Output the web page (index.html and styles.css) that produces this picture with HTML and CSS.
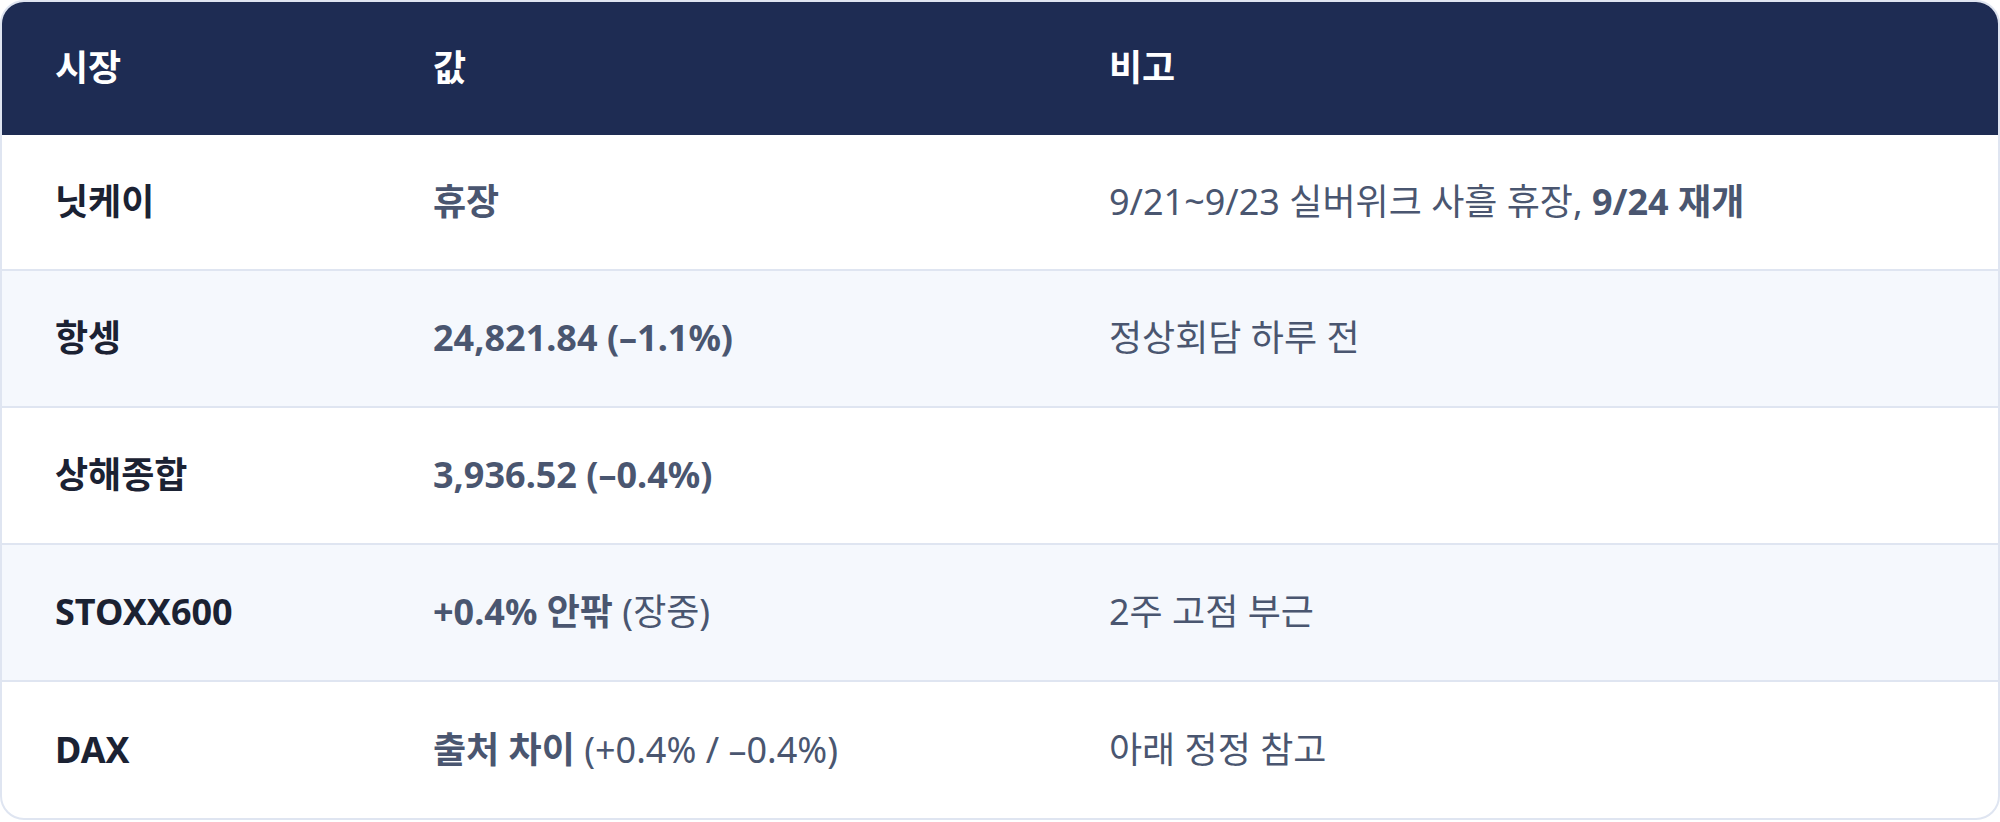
FILE: index.html
```html
<!DOCTYPE html>
<html lang="ko">
<head>
<meta charset="utf-8">
<title>시장</title>
<link rel="stylesheet" href="styles.css">
</head>
<body>
<div class="card">
  <table class="markets">
    <colgroup>
      <col class="c-market">
      <col class="c-value">
      <col class="c-note">
    </colgroup>
    <thead>
      <tr><th>시장</th><th>값</th><th>비고</th></tr>
    </thead>
    <tbody>
      <tr>
        <td class="name">닛케이</td>
        <td class="val"><strong>휴장</strong></td>
        <td class="note">9/21~9/23 실버위크 사흘 휴장, <strong>9/24 재개</strong></td>
      </tr>
      <tr class="alt">
        <td class="name">항셍</td>
        <td class="val"><strong>24,821.84 (–1.1%)</strong></td>
        <td class="note">정상회담 하루 전</td>
      </tr>
      <tr>
        <td class="name">상해종합</td>
        <td class="val"><strong>3,936.52 (–0.4%)</strong></td>
        <td class="note"></td>
      </tr>
      <tr class="alt">
        <td class="name">STOXX600</td>
        <td class="val"><strong>+0.4% 안팎</strong> (장중)</td>
        <td class="note">2주 고점 부근</td>
      </tr>
      <tr>
        <td class="name">DAX</td>
        <td class="val"><strong>출처 차이</strong> (+0.4% / –0.4%)</td>
        <td class="note">아래 정정 참고</td>
      </tr>
    </tbody>
  </table>
</div>
</body>
</html>
```
FILE: styles.css
```css
html, body {
  margin: 0;
  padding: 0;
  background: #ffffff;
}
body {
  font-family: "Noto Sans", "Noto Sans CJK KR", sans-serif;
  font-size: 36px;
  color: #4a5670;
}
.card {
  width: 2000px;
  box-sizing: border-box;
  border: 2px solid #dfe5f1;
  border-radius: 24px;
  overflow: hidden;
  background: #ffffff;
}
.markets {
  width: 100%;
  border-collapse: collapse;
  table-layout: fixed;
}
.c-market { width: 378px; }
.c-value { width: 676px; }
.markets th {
  background: #1e2c53;
  color: #ffffff;
  font-weight: 700;
  text-align: left;
  height: 133px;
  padding: 0 53px;
  box-sizing: border-box;
  line-height: 1.3;
}
.markets td {
  height: 137px;
  padding: 0 53px;
  box-sizing: border-box;
  border-top: 2px solid #dfe5f1;
  line-height: 1.3;
  vertical-align: middle;
}
.markets tbody tr:first-child td {
  border-top: none;
  height: 135px;
}
.markets tr.alt td { background: #f5f8fd; }
.name {
  font-weight: 700;
  color: #1b2233;
}
.val strong, .note strong {
  font-weight: 700;
}
```
